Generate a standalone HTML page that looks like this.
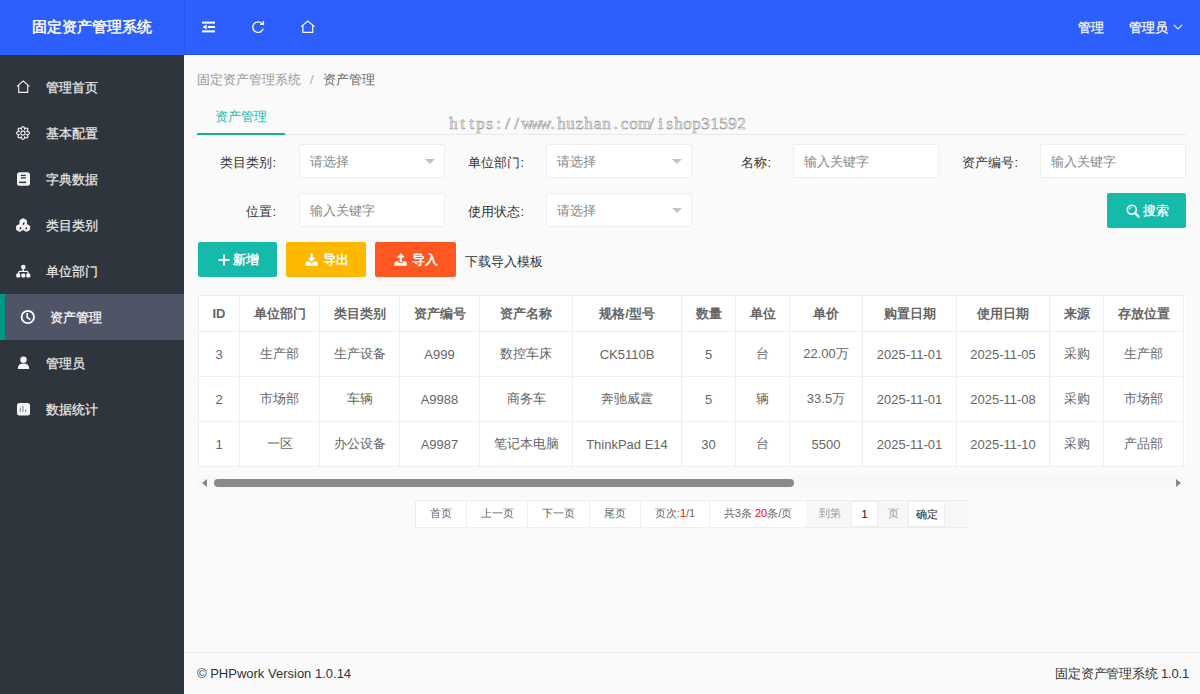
<!DOCTYPE html>
<html><head><meta charset="utf-8">
<style>
*{margin:0;padding:0;box-sizing:border-box}
html,body{width:1200px;height:694px;overflow:hidden}
body{position:relative;background:#fafafa;font-family:"Liberation Sans",sans-serif;color:#333;font-size:13px}
.abs{position:absolute}
#hd{left:0;top:0;width:1200px;height:55px;background:#2d5fff;-webkit-text-stroke:0.25px currentColor}
#hd .line{left:184px;top:54px;width:1016px;height:1px;background:#2150f8}
#logo{left:0;top:-1px;width:184px;height:55px;line-height:55px;text-align:center;color:#fff;font-size:15px;-webkit-text-stroke:0.45px #fff}
.hicon{position:absolute}
.htxt{position:absolute;color:#fff;font-size:13px;line-height:55px;top:0}
#side{left:0;top:55px;width:184px;height:639px;background:#2f353c;-webkit-text-stroke:0.25px currentColor}
.mi{position:absolute;left:0;width:184px;height:46px;line-height:46px;color:#e8e8e8;font-size:13px}
.mi span{position:absolute;left:46px;top:1px}
.mi svg{position:absolute}
.mi.on{background:#4f5466}
.mi.on:before{content:"";position:absolute;left:0;top:0;width:5px;height:46px;background:#009688}
.mi.on span{left:50px}
#crumb{left:197px;top:69px;line-height:22px;font-size:13px;color:#999}
#crumb b{font-weight:normal;color:#666}
#crumb i{font-style:normal;color:#aaa;margin:0 9px 0 9px}
#tabline{left:197px;top:134px;width:989px;height:1px;background:#e8e8e8}
#tabul{left:197px;top:133px;width:88px;height:2px;background:#16b777}
#tabtxt{left:197px;top:106px;width:88px;line-height:22px;text-align:center;color:#16baaa;font-size:13px}
.lbl{position:absolute;height:34px;line-height:34px;text-align:right;font-size:13px;color:#333;width:78px;padding-top:2px}
.inp{position:absolute;width:146px;height:34px;background:#fff;border:1px solid #eee;border-radius:2px;line-height:34px;padding-left:10px;color:#888;font-size:13px}
.inp .arr{position:absolute;right:9px;top:14px;width:0;height:0;border-left:5px solid transparent;border-right:5px solid transparent;border-top:5px solid #c2c2c2}
.btn{position:absolute;height:35px;line-height:35px;color:#fff;border-radius:2px;font-size:13px;font-weight:bold;text-align:center;-webkit-text-stroke:0}
.btn svg{position:absolute}
#tbl{left:198px;top:295px;border-collapse:collapse;background:#fff;table-layout:fixed}
#tbl td,#tbl th{border:1px solid #eee;text-align:center;font-size:13px;color:#666;padding:0;white-space:nowrap;overflow:hidden}
#tbl th{height:36px;font-weight:bold;color:#666;-webkit-text-stroke:0}
#tbl td{height:45px;-webkit-text-stroke:0}
#pager{left:415px;top:500px;height:28px;border:1px solid #eee;background:#fff}
.pg{position:absolute;top:0;height:26px;line-height:24px;font-size:11px;color:#666;text-align:center;border-right:1px solid #eee;-webkit-text-stroke:0}
#foot{left:184px;top:652px;width:1016px;height:42px;border-top:1px solid #eaeaea;background:#fafafa;-webkit-text-stroke:0}
#foot .l{position:absolute;left:13px;top:0;line-height:41px;font-size:13px;color:#333}
#foot .r{position:absolute;right:11px;letter-spacing:-0.2px;top:0;line-height:41px;font-size:13px;color:#333}
#wm{left:449px;top:114px;font-family:"Liberation Serif",serif;font-size:17px;line-height:20px;color:#fdfdfd;-webkit-text-stroke:0.6px #999;white-space:nowrap}#wm span{display:inline-block;width:9px;text-align:center}
</style></head><body>

<div id="hd" class="abs">
  <div class="abs line"></div>
  <div class="abs" style="left:184px;top:0;width:1px;height:54px;background:#2a57ee"></div>
  <div id="logo" class="abs">固定资产管理系统</div>
  <!-- fold icon -->
  <svg class="hicon" style="left:202px;top:21px" width="14" height="12" viewBox="0 0 14 12">
    <rect x="0" y="0.6" width="13" height="2" fill="#fff"/>
    <rect x="5.8" y="5" width="7.2" height="2" fill="#fff"/>
    <path d="M0.6 6 L4.6 3.4 L4.6 8.6 Z" fill="#fff"/>
    <rect x="0" y="9.4" width="13" height="2" fill="#fff"/>
  </svg>
  <!-- refresh icon -->
  <svg class="hicon" style="left:251px;top:20px" width="15" height="14" viewBox="0 0 15 14">
    <path d="M11.4 4 A5.3 5.3 0 1 0 12.2 8.6" fill="none" stroke="#fff" stroke-width="1.35"/>
    <path d="M9 4.4 L12.4 4.4 L12.4 1" fill="none" stroke="#fff" stroke-width="1.35"/>
  </svg>
  <!-- home icon -->
  <svg class="hicon" style="left:300px;top:20px" width="16" height="14" viewBox="0 0 16 14">
    <path d="M1.1 6.6 L7.8 1.1 L14.5 6.6 M2.9 5.3 L2.9 12.3 L12.7 12.3 L12.7 5.3" fill="none" stroke="#fff" stroke-width="1.2"/>
  </svg>
  <div class="htxt" style="left:1078px">管理</div>
  <div class="htxt" style="left:1129px">管理员</div>
  <svg class="hicon" style="left:1173px;top:24px" width="10" height="7" viewBox="0 0 10 7">
    <path d="M0.9 0.9 L5 5 L9.1 0.9" fill="none" stroke="#fff" stroke-width="1.05"/>
  </svg>
</div>

<div id="side" class="abs">
  <div class="mi" style="top:9px">
    <svg style="left:16px;top:16px" width="15" height="14" viewBox="0 0 15 14"><path d="M1 6.4 L7.2 1 L13.4 6.4 M2.7 5.1 L2.7 12.3 L11.7 12.3 L11.7 5.1" fill="none" stroke="#f0f0f0" stroke-width="1.15"/></svg>
    <span>管理首页</span></div>
  <div class="mi" style="top:55px">
    <svg style="left:15px;top:70px;top:15px" width="16" height="16" viewBox="0 0 16 16"><g fill="none" stroke="#ececec" stroke-width="1.2"><path d="M8.0 1.6 L8.4 1.7 L8.8 1.9 L9.1 2.3 L9.4 2.8 L9.6 3.4 L9.6 4.0 L10.1 3.7 L10.7 3.4 L11.2 3.2 L11.7 3.1 L12.2 3.2 L12.5 3.5 L12.8 3.8 L12.9 4.3 L12.8 4.8 L12.6 5.3 L12.3 5.9 L12.0 6.4 L12.6 6.4 L13.2 6.6 L13.7 6.9 L14.1 7.2 L14.3 7.6 L14.4 8.0 L14.3 8.4 L14.1 8.8 L13.7 9.1 L13.2 9.4 L12.6 9.6 L12.0 9.6 L12.3 10.1 L12.6 10.7 L12.8 11.2 L12.9 11.7 L12.8 12.2 L12.5 12.5 L12.2 12.8 L11.7 12.9 L11.2 12.8 L10.7 12.6 L10.1 12.3 L9.6 12.0 L9.6 12.6 L9.4 13.2 L9.1 13.7 L8.8 14.1 L8.4 14.3 L8.0 14.4 L7.6 14.3 L7.2 14.1 L6.9 13.7 L6.6 13.2 L6.4 12.6 L6.4 12.0 L5.9 12.3 L5.3 12.6 L4.8 12.8 L4.3 12.9 L3.8 12.8 L3.5 12.5 L3.2 12.2 L3.1 11.7 L3.2 11.2 L3.4 10.7 L3.7 10.1 L4.0 9.6 L3.4 9.6 L2.8 9.4 L2.3 9.1 L1.9 8.8 L1.7 8.4 L1.6 8.0 L1.7 7.6 L1.9 7.2 L2.3 6.9 L2.8 6.6 L3.4 6.4 L4.0 6.4 L3.7 5.9 L3.4 5.3 L3.2 4.8 L3.1 4.3 L3.2 3.8 L3.5 3.5 L3.8 3.2 L4.3 3.1 L4.8 3.2 L5.3 3.4 L5.9 3.7 L6.4 4.0 L6.4 3.4 L6.6 2.8 L6.9 2.3 L7.2 1.9 L7.6 1.7Z"/><circle cx="8" cy="8" r="2.1"/></g></svg>
    <span>基本配置</span></div>
  <div class="mi" style="top:101px">
    <svg style="left:16px;top:15px" width="15" height="15" viewBox="0 0 15 15"><rect x="1" y="1.2" width="13" height="13.5" rx="2.5" fill="#f4f4f4"/><rect x="4.8" y="3.8" width="5" height="1.3" fill="#2f353c"/><rect x="4.8" y="6.3" width="5" height="1.3" fill="#2f353c"/><rect x="3.2" y="10.6" width="7" height="1.5" fill="#2f353c"/></svg>
    <span>字典数据</span></div>
  <div class="mi" style="top:147px">
    <svg style="left:15px;top:15px" width="16" height="16" viewBox="0 0 16 16"><path d="M8.20 1.50 L4.91 3.40 L4.91 7.20 L8.20 9.10 L11.49 7.20 L11.49 3.40ZM4.70 7.20 L1.50 9.05 L1.50 12.75 L4.70 14.60 L7.90 12.75 L7.90 9.05ZM11.50 7.20 L8.30 9.05 L8.30 12.75 L11.50 14.60 L14.70 12.75 L14.70 9.05Z" fill="#f4f4f4" stroke="#f4f4f4" stroke-width="0.8" stroke-linejoin="round"/><g fill="#2f353c"><ellipse cx="8.6" cy="6.6" rx="0.8" ry="1.4" transform="rotate(25 8.6 6.6)"/><ellipse cx="5.4" cy="11.4" rx="0.8" ry="1.3" transform="rotate(15 5.4 11.4)"/><ellipse cx="11.3" cy="11.4" rx="0.8" ry="1.3" transform="rotate(15 11.3 11.4)"/></g></svg>
    <span>类目类别</span></div>
  <div class="mi" style="top:193px">
    <svg style="left:15px;top:15px" width="16" height="16" viewBox="0 0 16 16"><g fill="#f4f4f4"><circle cx="8.3" cy="4" r="2.3"/><rect x="7.6" y="5" width="1.4" height="4"/><path d="M3 11.5 L3 9.6 Q3 7.8 4.8 7.8 L11.8 7.8 Q13.6 7.8 13.6 9.6 L13.6 11.5 L12.3 11.5 L12.3 9.8 Q12.3 9.1 11.6 9.1 L5 9.1 Q4.3 9.1 4.3 9.8 L4.3 11.5 Z"/><rect x="1.2" y="10.4" width="4" height="4.2" rx="1.3"/><rect x="6.3" y="10.4" width="4" height="4.2" rx="1.3"/><rect x="11.3" y="10.4" width="4" height="4.2" rx="1.3"/></g></svg>
    <span>单位部门</span></div>
  <div class="mi on" style="top:239px">
    <svg style="left:20px;top:15px" width="16" height="16" viewBox="0 0 16 16"><circle cx="7.8" cy="8" r="6.2" fill="none" stroke="#fff" stroke-width="1.8"/><path d="M7.2 4 L7.2 8.4 L10.3 10.6" fill="none" stroke="#fff" stroke-width="1.6"/></svg>
    <span style="color:#fff">资产管理</span></div>
  <div class="mi" style="top:285px">
    <svg style="left:16px;top:15px" width="15" height="16" viewBox="0 0 15 16"><circle cx="7.5" cy="4.8" r="3.2" fill="#f4f4f4"/><path d="M1.8 14 Q1.8 8.6 7.5 8.6 Q13.2 8.6 13.2 14 Z" fill="#f4f4f4"/></svg>
    <span>管理员</span></div>
  <div class="mi" style="top:331px">
    <svg style="left:16px;top:16px" width="15" height="15" viewBox="0 0 15 15"><rect x="1" y="1" width="13" height="12.5" rx="2.5" fill="#f4f4f4"/><rect x="3.8" y="5.6" width="0.9" height="4.2" fill="#6b6f78"/><rect x="6.5" y="3.8" width="0.9" height="6" fill="#6b6f78"/><rect x="9.2" y="7.8" width="1" height="2" fill="#6b6f78"/></svg>
    <span>数据统计</span></div>
</div>

<div id="crumb" class="abs">固定资产管理系统<i>/</i><b>资产管理</b></div>
<div id="wm" class="abs"><span>h</span><span>t</span><span>t</span><span>p</span><span>s</span><span>:</span><span>/</span><span>/</span><span>w</span><span>w</span><span>w</span><span>.</span><span>h</span><span>u</span><span>z</span><span>h</span><span>a</span><span>n</span><span>.</span><span>c</span><span>o</span><span>m</span><span>/</span><span>i</span><span>s</span><span>h</span><span>o</span><span>p</span><span>3</span><span>1</span><span>5</span><span>9</span><span>2</span></div>
<div id="tabtxt" class="abs">资产管理</div>
<div id="tabline" class="abs"></div>
<div id="tabul" class="abs"></div>

<!-- form row 1 -->
<div class="lbl" style="left:198px;top:144px">类目类别:</div>
<div class="inp" style="left:299px;top:144px">请选择<i class="arr"></i></div>
<div class="lbl" style="left:446px;top:144px">单位部门:</div>
<div class="inp" style="left:546px;top:144px">请选择<i class="arr"></i></div>
<div class="lbl" style="left:693px;top:144px">名称:</div>
<div class="inp" style="left:793px;top:144px">输入关键字</div>
<div class="lbl" style="left:940px;top:144px">资产编号:</div>
<div class="inp" style="left:1040px;top:144px">输入关键字</div>
<!-- form row 2 -->
<div class="lbl" style="left:198px;top:193px">位置:</div>
<div class="inp" style="left:299px;top:193px">输入关键字</div>
<div class="lbl" style="left:446px;top:193px">使用状态:</div>
<div class="inp" style="left:546px;top:193px">请选择<i class="arr"></i></div>
<div class="btn" style="left:1107px;top:193px;width:79px;background:#16baaa">
  <svg style="left:19px;top:11px" width="14" height="14" viewBox="0 0 14 14"><circle cx="5.8" cy="5.8" r="4.5" fill="none" stroke="#fff" stroke-width="1.6"/><path d="M9 9 L12.6 12.6" stroke="#fff" stroke-width="2.2" stroke-linecap="round"/><path d="M3.4 5.6 A2.4 2.4 0 0 1 5.6 3.4" fill="none" stroke="#fff" stroke-width="1"/></svg>
  <span style="position:absolute;left:36px;top:0;font-weight:normal;-webkit-text-stroke:0.25px #fff">搜索</span></div>

<!-- buttons -->
<div class="btn" style="left:198px;top:242px;width:79px;background:#16baaa">
  <svg style="left:20px;top:12px" width="12" height="12" viewBox="0 0 12 12"><rect x="0.5" y="5.1" width="11" height="1.8" fill="#fff"/><rect x="5.1" y="0.5" width="1.8" height="11" fill="#fff"/></svg>
  <span style="position:absolute;left:35px;top:0">新增</span></div>
<div class="btn" style="left:286px;top:242px;width:80px;background:#ffb800">
  <svg style="left:19px;top:11px" width="13" height="13" viewBox="0 0 13 13"><path d="M5.5 0.6 Q5.5 0.3 6.6 0.3 Q7.8 0.3 7.8 0.6 L7.8 5.1 L10.2 5.1 L6.6 9 L2.9 5.1 L5.5 5.1 Z" fill="#fff"/><path d="M0.4 10.4 Q0.4 8.3 2.6 8.3 L3.8 8.3 L6.6 10.6 L9.4 8.3 L10.6 8.3 Q12.8 8.3 12.8 10.4 L12.8 12.7 L0.4 12.7 Z" fill="#fff"/></svg>
  <span style="position:absolute;left:37px;top:0">导出</span></div>
<div class="btn" style="left:375px;top:242px;width:81px;background:#ff5722">
  <svg style="left:19px;top:11px" width="13" height="13" viewBox="0 0 13 13"><path d="M5.6 9.2 L7.9 9.2 L7.9 4.6 L10.8 4.6 L6.75 0.3 L2.7 4.6 L5.6 4.6 Z" fill="#fff"/><path d="M0.4 10.4 Q0.4 8.3 2.6 8.3 L4.5 8.3 L4.5 10 L8.7 10 L8.7 8.3 L10.6 8.3 Q12.8 8.3 12.8 10.4 L12.8 12.7 L0.4 12.7 Z" fill="#fff"/></svg>
  <span style="position:absolute;left:37px;top:0">导入</span></div>
<div class="abs" style="left:465px;top:252px;line-height:20px;font-size:13px;color:#333">下载导入模板</div>

<!-- table -->
<table id="tbl" class="abs">
<colgroup><col style="width:41px"><col style="width:80px"><col style="width:80px"><col style="width:80px"><col style="width:93px"><col style="width:109px"><col style="width:54px"><col style="width:54px"><col style="width:73px"><col style="width:94px"><col style="width:93px"><col style="width:54px"><col style="width:80px"></colgroup>
<tr><th>ID</th><th>单位部门</th><th>类目类别</th><th>资产编号</th><th>资产名称</th><th>规格/型号</th><th>数量</th><th>单位</th><th>单价</th><th>购置日期</th><th>使用日期</th><th>来源</th><th>存放位置</th></tr>
<tr><td>3</td><td>生产部</td><td>生产设备</td><td>A999</td><td>数控车床</td><td>CK5110B</td><td>5</td><td>台</td><td>22.00万</td><td>2025-11-01</td><td>2025-11-05</td><td>采购</td><td>生产部</td></tr>
<tr><td>2</td><td>市场部</td><td>车辆</td><td>A9988</td><td>商务车</td><td>奔驰威霆</td><td>5</td><td>辆</td><td>33.5万</td><td>2025-11-01</td><td>2025-11-08</td><td>采购</td><td>市场部</td></tr>
<tr><td>1</td><td>一区</td><td>办公设备</td><td>A9987</td><td>笔记本电脑</td><td>ThinkPad E14</td><td>30</td><td>台</td><td>5500</td><td>2025-11-01</td><td>2025-11-10</td><td>采购</td><td>产品部</td></tr>
</table>
<div class="abs" style="left:1184px;top:295px;width:2px;height:172px;background:#fff"></div>
<!-- scrollbar -->
<div class="abs" style="left:197px;top:475px;width:989px;height:15px;background:#f8f8f8"></div>
<div class="abs" style="left:202px;top:479px;width:0;height:0;border-top:4px solid transparent;border-bottom:4px solid transparent;border-right:5px solid #888"></div>
<div class="abs" style="left:1176px;top:479px;width:0;height:0;border-top:4px solid transparent;border-bottom:4px solid transparent;border-left:5px solid #888"></div>
<div class="abs" style="left:214px;top:479px;width:580px;height:8px;border-radius:4px;background:#8a8a8a"></div>

<!-- pager -->
<div id="pager" class="abs" style="width:553px">
  <div class="pg" style="left:0;width:51px">首页</div>
  <div class="pg" style="left:51px;width:61px">上一页</div>
  <div class="pg" style="left:112px;width:62px">下一页</div>
  <div class="pg" style="left:174px;width:51px">尾页</div>
  <div class="pg" style="left:225px;width:69px">页次:<span style="color:#f00">1</span>/1</div>
  <div class="pg" style="left:294px;width:97px">共3条 <span style="color:#f00">20</span>条/页</div>
  <div class="pg" style="left:390px;width:162px;background:#f7f7f7;border-right:0"></div>
  <div class="pg" style="left:391px;width:45px;color:#999;border:0;background:transparent">到第</div>
  <div class="pg" style="left:435px;width:27px;background:#fff;color:#222;border:1px solid #eee;top:0;height:26px;-webkit-text-stroke:0.1px #222">1</div>
  <div class="pg" style="left:462px;width:31px;color:#999;border:0;background:transparent">页</div>
  <div class="pg" style="left:492px;width:37px;background:#fff;color:#222;border:1px solid #eee;top:0;height:26px;-webkit-text-stroke:0px #222">确定</div>
</div>

<div id="foot" class="abs"><div class="l">© PHPwork Version 1.0.14</div><div class="r">固定资产管理系统 1.0.1</div></div>

</body></html>
